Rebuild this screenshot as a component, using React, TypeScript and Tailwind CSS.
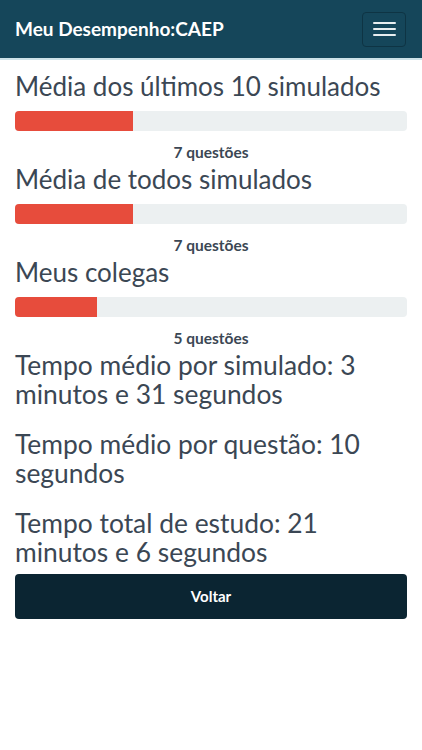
import React from "react";

const font = { fontFamily: "Lato, 'Open Sans', sans-serif" };

function Block({ title, pct, label }: { title: string; pct: number; label: string }) {
  return (
    <div>
      <h3 className="text-[26px] leading-[30px] text-[#3b4754] font-normal">{title}</h3>
      <div className="mt-[10px] h-[20px] w-full rounded-[4px] bg-[#ecf0f1] overflow-hidden">
        <div className="h-full bg-[#e74c3c]" style={{ width: `${pct}%` }} />
      </div>
      <div className="mt-[12px] text-center text-[15.5px] leading-[18px] font-bold text-[#3b4754]">{label}</div>
    </div>
  );
}

export default function App() {
  return (
    <div className="min-h-[750px] w-[422px] bg-white" style={font}>
      <header className="h-[60px] bg-[#15465a] border-b-2 border-[#cde2e8] flex items-center justify-between pl-[15px] pr-[16px]">
        <span className="text-white text-[19px] font-bold">Meu Desempenho:CAEP</span>
        <button className="w-[44px] h-[35px] rounded-[4px] border border-[#0e3444] flex flex-col items-center justify-center gap-[4px]">
          <span className="block w-[23px] h-[2px] bg-[#e8eef0] rounded" />
          <span className="block w-[23px] h-[2px] bg-[#e8eef0] rounded" />
          <span className="block w-[23px] h-[2px] bg-[#e8eef0] rounded" />
        </button>
      </header>
      <main className="px-[15px] pt-[11px]">
        <div className="flex flex-col gap-[3px]">
          <Block title="Média dos últimos 10 simulados" pct={30} label="7 questões" />
          <Block title="Média de todos simulados" pct={30} label="7 questões" />
          <Block title="Meus colegas" pct={21} label="5 questões" />
        </div>
        <div className="mt-[4px] flex flex-col gap-[21px] text-[26.4px] leading-[29px] text-[#3b4754]">
          <p>Tempo médio por simulado: 3 minutos e 31 segundos</p>
          <p>Tempo médio por questão: 10 segundos</p>
          <p>Tempo total de estudo: 21 minutos e 6 segundos</p>
        </div>
        <button className="mt-[7px] w-full h-[45px] rounded-[4px] bg-[#0b2532] text-white text-[15px] font-bold">
          Voltar
        </button>
      </main>
    </div>
  );
}
